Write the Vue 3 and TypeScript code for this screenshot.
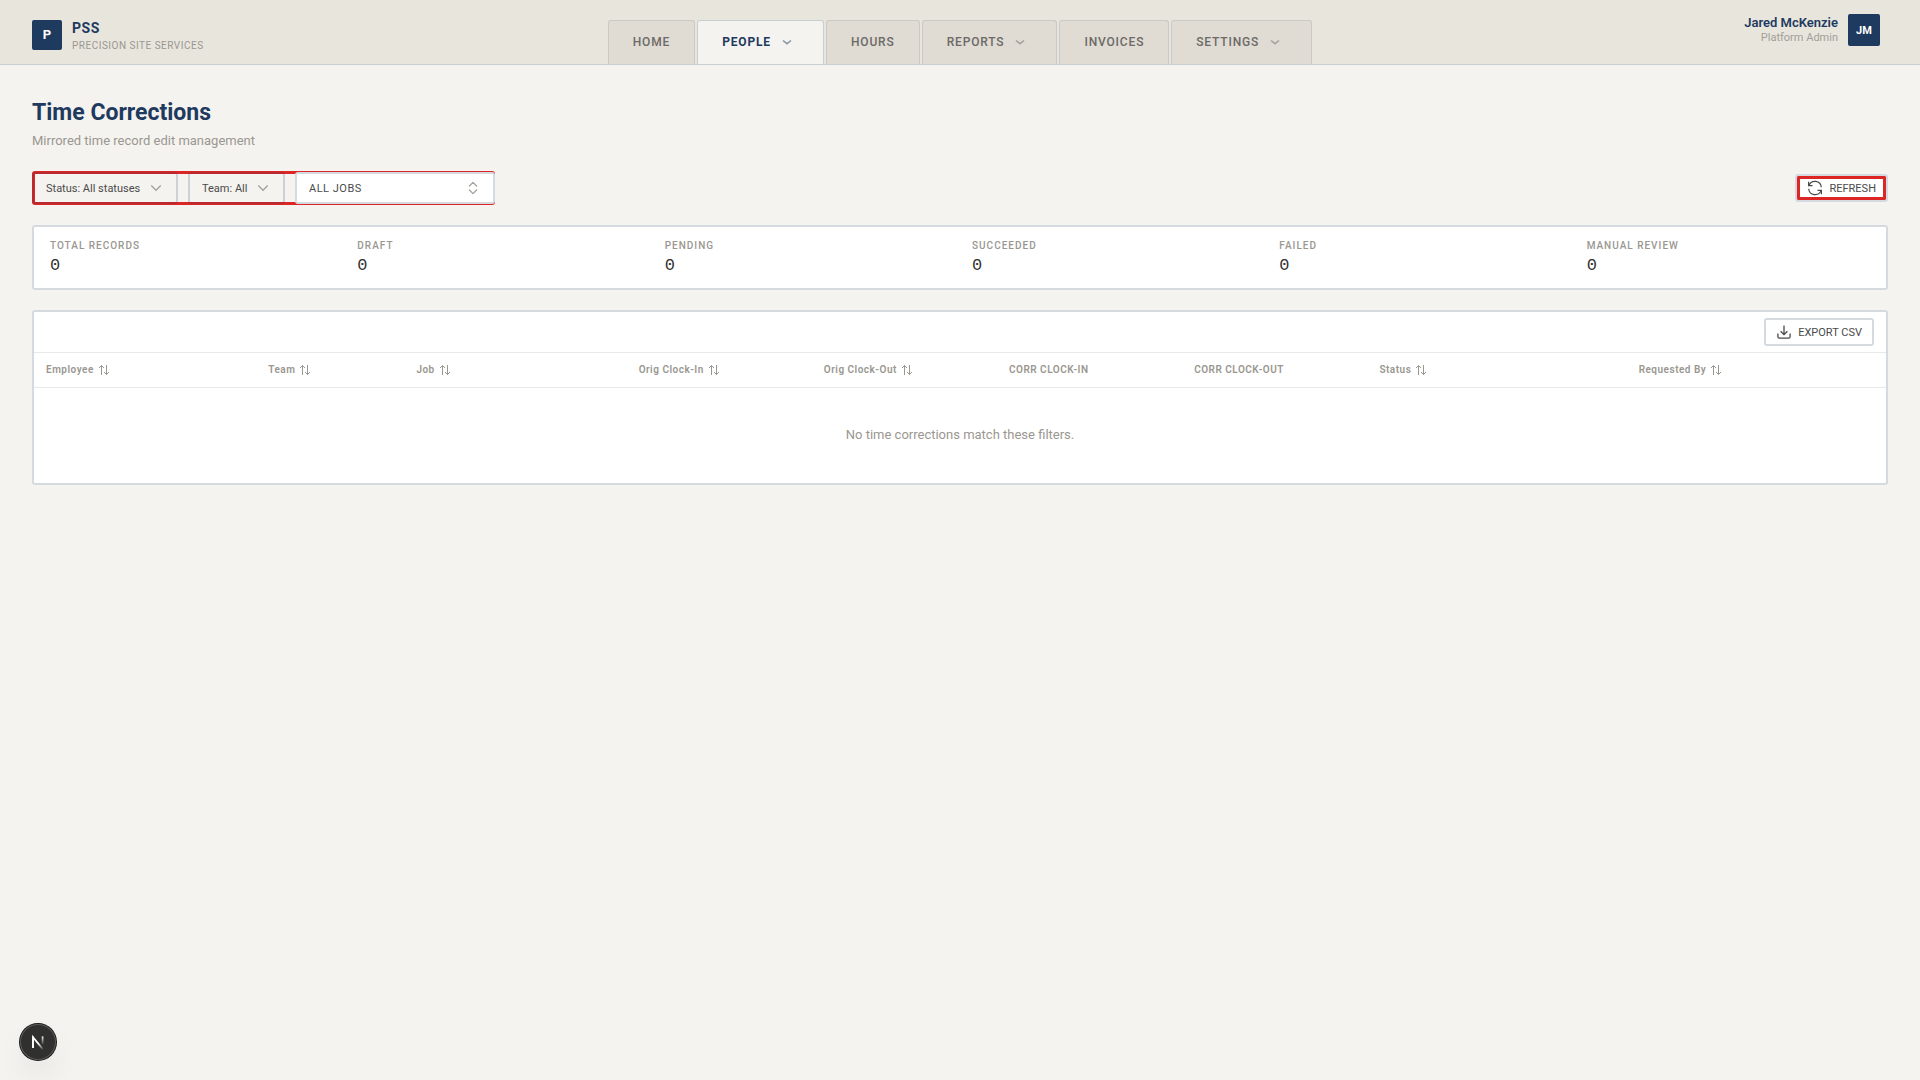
<script setup lang="ts">
interface Tab {
  label: string
  menu?: boolean
  active?: boolean
}

interface Column {
  label: string
  width: number
  sortable: boolean
}

const tabs: Tab[] = [
  { label: 'HOME' },
  { label: 'PEOPLE', menu: true, active: true },
  { label: 'HOURS' },
  { label: 'REPORTS', menu: true },
  { label: 'INVOICES' },
  { label: 'SETTINGS', menu: true },
]

const stats = [
  { label: 'TOTAL RECORDS', value: 0 },
  { label: 'DRAFT', value: 0 },
  { label: 'PENDING', value: 0 },
  { label: 'SUCCEEDED', value: 0 },
  { label: 'FAILED', value: 0 },
  { label: 'MANUAL REVIEW', value: 0 },
]

const columns: Column[] = [
  { label: 'Employee', width: 12, sortable: true },
  { label: 'Team', width: 8, sortable: true },
  { label: 'Job', width: 12, sortable: true },
  { label: 'Orig Clock-In', width: 10, sortable: true },
  { label: 'Orig Clock-Out', width: 10, sortable: true },
  { label: 'CORR CLOCK-IN', width: 10, sortable: false },
  { label: 'CORR CLOCK-OUT', width: 10, sortable: false },
  { label: 'Status', width: 14, sortable: true },
  { label: 'Requested By', width: 14, sortable: true },
]
</script>

<template>
  <div class="page">
    <header class="topbar">
      <a class="brand" href="#">
        <span class="logo">P</span>
        <span class="brand-text">
          <span class="brand-name">PSS</span>
          <span class="brand-sub">PRECISION SITE SERVICES</span>
        </span>
      </a>
      <nav class="tabs">
        <a v-for="tab in tabs" :key="tab.label" href="#" class="tab" :class="{ active: tab.active }">
          <span>{{ tab.label }}</span>
          <span v-if="tab.menu" class="caret">
            <svg width="12" height="12" viewBox="0 0 12 12" fill="none" stroke="currentColor" stroke-width="1.5">
              <path d="M2 4.5 6 7.7 10 4.5" />
            </svg>
          </span>
        </a>
      </nav>
      <div class="user">
        <div class="user-text">
          <span class="user-name">Jared McKenzie</span>
          <span class="user-role">Platform Admin</span>
        </div>
        <button type="button" class="avatar">JM</button>
      </div>
    </header>

    <main class="content">
      <div class="heading">
        <h1>Time Corrections</h1>
        <p>Mirrored time record edit management</p>
      </div>

      <div class="toolbar">
        <div class="filters">
          <label class="filter">
            <select aria-label="Status filter">
              <option>Status: All statuses</option>
            </select>
            <svg width="16" height="16" viewBox="0 0 16 16" fill="none" stroke="currentColor" stroke-width="1.3">
              <path d="M3.3 5.5 8 10.3l4.7-4.8" />
            </svg>
          </label>
          <label class="filter">
            <select aria-label="Team filter">
              <option>Team: All</option>
            </select>
            <svg width="16" height="16" viewBox="0 0 16 16" fill="none" stroke="currentColor" stroke-width="1.3">
              <path d="M3.3 5.5 8 10.3l4.7-4.8" />
            </svg>
          </label>
          <label class="filter jobs">
            <select aria-label="Job filter">
              <option>ALL JOBS</option>
            </select>
            <svg width="16" height="16" viewBox="0 0 16 16" fill="none" stroke="currentColor" stroke-width="1.3" stroke-linecap="round" stroke-linejoin="round">
              <path d="M4.4 6 8 2.4 11.6 6M4.4 10 8 13.6 11.6 10" />
            </svg>
          </label>
        </div>
        <button type="button" class="action refresh">
          <svg width="16" height="16" viewBox="0 0 16 16" fill="none" stroke="currentColor" stroke-width="1.2">
            <path d="M1.6 1.8v3.9h3.9M14.4 14.2v-3.9h-3.9" />
            <path d="M1.9 5.6A6.4 6.4 0 0 1 14.3 7.3M1.7 8.7a6.4 6.4 0 0 0 12.4 1.7" />
          </svg>
          REFRESH
        </button>
      </div>

      <dl class="card stats">
        <div v-for="stat in stats" :key="stat.label">
          <dt>{{ stat.label }}</dt>
          <dd>{{ stat.value }}</dd>
        </div>
      </dl>

      <section class="card">
        <div class="card-bar">
          <button type="button" class="action">
            <svg width="16" height="16" viewBox="0 0 16 16" fill="none" stroke="currentColor" stroke-width="1.3">
              <path d="M8 1.5v9M4.6 7.2 8 10.6l3.4-3.4M1.9 9.6v3.2q0 1.4 1.4 1.4h9.4q1.4 0 1.4-1.4V9.6" />
            </svg>
            EXPORT CSV
          </button>
        </div>
        <table>
          <colgroup>
            <col v-for="col in columns" :key="col.label" :style="{ width: col.width + '%' }" />
          </colgroup>
          <thead>
            <tr>
              <th v-for="col in columns" :key="col.label" scope="col">
                <button v-if="col.sortable" type="button" class="sort">
                  {{ col.label }}
                  <svg width="12" height="12" viewBox="0 0 12 12" fill="none" stroke="currentColor" stroke-width="1">
                    <path d="M3.5 11V1.5M1 4l2.5-2.5L6 4M8.5 1v9.5M6 8l2.5 2.5L11 8" />
                  </svg>
                </button>
                <template v-else>{{ col.label }}</template>
              </th>
            </tr>
          </thead>
          <tbody>
            <tr>
              <td :colspan="columns.length">No time corrections match these filters.</td>
            </tr>
          </tbody>
        </table>
      </section>
    </main>

    <button type="button" class="dev-badge" aria-label="Open developer tools">
      <svg width="36" height="36" viewBox="0 0 36 36" fill="none" stroke-width="1.7">
        <defs>
          <linearGradient id="diag" gradientUnits="userSpaceOnUse" x1="19" y1="19" x2="24" y2="25">
            <stop stop-color="#fff" />
            <stop offset="1" stop-color="#fff" stop-opacity="0" />
          </linearGradient>
          <linearGradient id="stem" gradientUnits="userSpaceOnUse" x1="0" y1="12" x2="0" y2="21">
            <stop stop-color="#fff" />
            <stop offset="1" stop-color="#fff" stop-opacity="0" />
          </linearGradient>
        </defs>
        <path d="M13 24V13.2L23.2 25.6" stroke="url(#diag)" />
        <path d="M13 24V12.4" stroke="#fff" />
        <path d="M22.6 12.4v9.2" stroke="url(#stem)" />
      </svg>
    </button>
  </div>
</template>

<style>
body {
  background: #f5f3ef;
}
</style>

<style scoped>
.page {
  min-height: 100vh;
  background: #f5f3ef;
  color: #4a4a4a;
  font-family: Roboto, "Liberation Sans", sans-serif;
  font-size: 13px;
  line-height: 20px;
}

.page * {
  box-sizing: border-box;
}

button,
select {
  font-family: inherit;
  color: inherit;
  cursor: pointer;
}

a {
  color: inherit;
  text-decoration: none;
}

svg {
  flex: none;
}

.topbar {
  display: grid;
  grid-template-columns: 1fr auto 1fr;
  height: 65px;
  padding: 0 32px;
  background: #e8e5dd;
  border-bottom: 1px solid #c9ced3;
}

.brand {
  display: flex;
  align-items: center;
  align-self: start;
  justify-self: start;
  gap: 10px;
  padding-top: 17px;
}

.logo,
.avatar {
  display: flex;
  align-items: center;
  justify-content: center;
  border: 0;
  border-radius: 2px;
  background: #1e3a5f;
  color: #fff;
  font-weight: 700;
}

.logo {
  width: 30px;
  height: 30px;
  font-size: 13px;
}

.brand-text,
.user-text {
  display: flex;
  flex-direction: column;
}

.brand-name {
  font-size: 14px;
  font-weight: 700;
  line-height: 22px;
  letter-spacing: 0.5px;
  color: #1e3a5f;
}

.brand-sub {
  font-size: 10px;
  line-height: 14px;
  letter-spacing: 0.5px;
  color: #9a9791;
}

.tabs {
  display: flex;
  align-items: flex-end;
  gap: 2px;
}

.tab {
  display: flex;
  align-items: center;
  gap: 4px;
  height: 44px;
  padding: 0 24px 2px;
  border: 1px solid #cbc9c5;
  border-bottom: 0;
  border-radius: 3px 3px 0 0;
  background: #e0dbd3;
  font-size: 12px;
  font-weight: 500;
  letter-spacing: 0.07em;
  color: #6b6a67;
}

.tab.active {
  background: #f5f3ef;
  border-color: #c9ced3;
  font-weight: 700;
  color: #1e3a5f;
}

.caret {
  display: flex;
  justify-content: center;
  width: 24px;
  opacity: 0.5;
}

.user {
  display: flex;
  align-items: center;
  align-self: start;
  justify-self: end;
  gap: 10px;
  padding: 14px 8px 0 0;
}

.user-text {
  text-align: right;
}

.user-name {
  font-size: 13px;
  font-weight: 600;
  line-height: 16px;
  color: #1e3a5f;
}

.user-role {
  font-size: 11px;
  line-height: 14px;
  color: #a19e98;
}

.avatar {
  width: 32px;
  height: 32px;
  padding: 0;
  font-size: 11px;
}

.content {
  display: flex;
  flex-direction: column;
  gap: 20px;
  padding: 32px;
}

h1 {
  margin: 0 0 2px;
  font-size: 23px;
  font-weight: 700;
  line-height: 32px;
  color: #1e3a5f;
}

.heading p {
  margin: 0;
  color: #9a9791;
}

.toolbar {
  display: flex;
  align-items: center;
  justify-content: space-between;
}

.filters {
  display: flex;
  gap: 10px;
  padding: 1px 0;
  border-radius: 3px;
  box-shadow: inset 0 0 0 3px #dc2626;
}

.filter {
  display: flex;
  align-items: center;
  gap: 7px;
  height: 32px;
  padding: 0 12px;
  border: 2px solid rgba(30, 58, 95, 0.18);
  border-radius: 3px;
}

.filter svg {
  color: #a3a19d;
}

.filter select {
  flex: 1;
  padding: 0;
  border: 0;
  appearance: none;
  background: transparent;
  font-size: 11px;
}

.filter.jobs {
  width: 200px;
  border-color: #d5dae1;
  background: #fff;
}

.jobs select {
  letter-spacing: 0.5px;
}

.action {
  display: flex;
  align-items: center;
  gap: 6px;
  height: 28px;
  padding: 0 10px;
  border: 2px solid #d5dae1;
  border-radius: 3px;
  background: #fff;
  font-size: 11px;
}

.action.refresh {
  box-shadow: inset 0 0 0 3px #dc2626;
}

.card {
  margin: 0;
  border: 2px solid #d5dae1;
  border-radius: 3px;
  background: #fff;
}

.stats {
  display: grid;
  grid-template-columns: repeat(6, 1fr);
  column-gap: 24px;
  padding: 12px 16px 8px;
}

.stats dt {
  font-size: 10px;
  font-weight: 500;
  line-height: 13px;
  letter-spacing: 1px;
  color: #9a9791;
}

.stats dd {
  margin: 0;
  font-family: "Liberation Mono", monospace;
  font-size: 17px;
  line-height: 28px;
  color: #333;
}

.card-bar {
  display: flex;
  justify-content: flex-end;
  padding: 6px 12px;
  border-bottom: 1px solid #e6e8ec;
}

table {
  width: 100%;
  table-layout: fixed;
  border-spacing: 0;
}

th {
  height: 35px;
  padding: 0 12px;
  border-bottom: 1px solid #e6e8ec;
  font-size: 10px;
  font-weight: 600;
  line-height: 16px;
  letter-spacing: 0.5px;
  text-align: left;
  color: #9a9791;
}

.sort {
  display: flex;
  align-items: center;
  gap: 4px;
  padding: 0;
  border: 0;
  background: transparent;
  font-size: inherit;
  font-weight: inherit;
  line-height: inherit;
  letter-spacing: inherit;
}

td {
  height: 95px;
  padding: 0 0 2px;
  text-align: center;
  color: #9a9791;
}

.dev-badge {
  position: fixed;
  bottom: 20px;
  left: 20px;
  width: 36px;
  height: 36px;
  padding: 0;
  border: 0;
  border-radius: 50%;
  background: #30302e;
  box-shadow: 0 0 0 1px #171717, inset 0 0 0 1px #5a5a58, 0 16px 32px -8px rgba(0, 0, 0, 0.18);
}

.dev-badge svg {
  display: block;
}
</style>
